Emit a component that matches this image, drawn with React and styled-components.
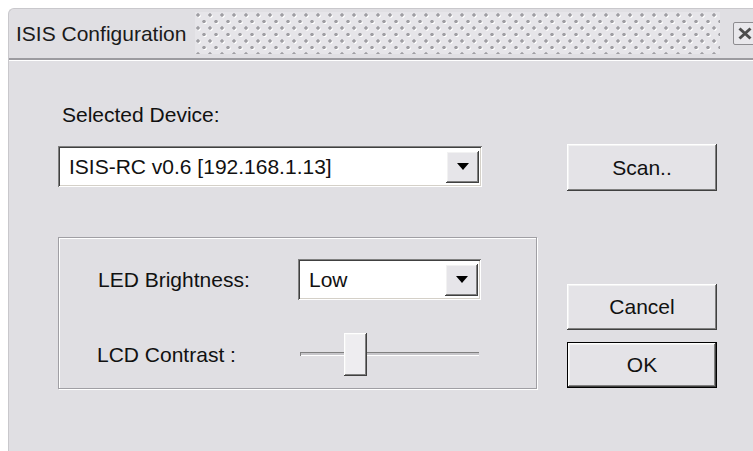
import React from "react";
import styled, { createGlobalStyle } from "styled-components";

const GlobalStyle = createGlobalStyle`
	body {
		margin: 0;
		background: #fff;
		font-family: "Liberation Sans", Arial, sans-serif;
	}
`;

const bevelOut = `
	box-shadow: inset -1px -1px #404040, inset 1px 1px #fff,
		inset -2px -2px #808080, inset 2px 2px #f2f2f2;
`;

const Page = styled.div`
	width: 753px;
	height: 451px;
	overflow: hidden;
	padding: 8px 0 0 8px;
	box-sizing: border-box;
`;

const Window = styled.div`
	width: 765px;
	height: 460px;
	background: #e0dfe3;
	border-top: 1px solid #c9c8cc;
	border-left: 1px solid #c9c8cc;
	border-top-left-radius: 6px;
	display: flex;
	flex-direction: column;
`;

const TitleBar = styled.div`
	height: 49px;
	display: flex;
	align-items: center;
	padding: 0 17px 0 7px;
	border-bottom: 2px solid #9c9ba0;
	box-shadow: 0 1px #fff;
`;

const Title = styled.span`
	font-size: 21px;
	color: #1a1a1a;
	white-space: nowrap;
`;

// dotted grip pattern filling the rest of the title bar
const Dots = styled.div`
	flex: 1;
	align-self: stretch;
	margin: 3px 13px 4px 9px;
	background-color: #e6e5e9;
	background-image: radial-gradient(circle at 3px 3px, #9f9ea3 1.4px, transparent 2px),
		radial-gradient(circle at 4px 4px, #fff 1.4px, transparent 2px),
		radial-gradient(circle at 9px 9.5px, #9f9ea3 1.4px, transparent 2px),
		radial-gradient(circle at 10px 10.5px, #fff 1.4px, transparent 2px);
	background-size: 12px 13px;
`;

const CloseBox = styled.div`
	width: 24px;
	height: 23px;
	box-sizing: border-box;
	border: 1px solid #8d8c90;
	border-radius: 2px;
	background: #e9e8ec;
	display: flex;
	align-items: center;
	justify-content: center;
`;

const Body = styled.div`
	display: flex;
	padding: 43px 0 0 49px;
	gap: 30px;
`;

const LeftCol = styled.div`
	width: 479px;
	display: flex;
	flex-direction: column;
`;

const RightCol = styled.div`
	width: 150px;
	display: flex;
	flex-direction: column;
	padding-top: 41px;
`;

const Label = styled.div`
	font-size: 21px;
	line-height: 24px;
	color: #111;
	padding-left: ${(p) => p.indent || 0}px;
	white-space: nowrap;
`;

const Combo = styled.div`
	width: ${(p) => p.width}px;
	height: 41px;
	box-sizing: border-box;
	margin-top: ${(p) => p.top || 0}px;
	background: #fff;
	display: flex;
	align-items: center;
	padding: 3px 3px 3px 11px;
	box-shadow: inset 1px 1px #808080, inset -1px -1px #fff,
		inset 2px 2px #404040, inset -2px -2px #d4d0c8;
`;

const ComboText = styled.span`
	flex: 1;
	font-size: 21px;
	color: #111;
	white-space: nowrap;
`;

const DropButton = styled.div`
	width: 33px;
	height: 32px;
	background: #e6e5e9;
	display: flex;
	align-items: center;
	justify-content: center;
	${bevelOut}
`;

const GroupBox = styled.div`
	margin-top: 50px;
	height: 152px;
	box-sizing: border-box;
	border: 1px solid #a09fa4;
	box-shadow: inset 1px 1px #fff, 1px 1px #fff;
	padding: 21px 0 12px 38px;
	display: grid;
	grid-template-columns: 201px 183px;
	grid-template-rows: 41px 43px;
	row-gap: 33px;
	align-items: center;
`;

const Slider = styled.div`
	position: relative;
	width: 183px;
	height: 43px;

	&::before {
		content: "";
		position: absolute;
		left: 2px;
		right: 2px;
		top: 19px;
		height: 4px;
		background: #c6c5c9;
		box-shadow: inset 0 1px #808080, inset 1px 0 #808080, inset 0 -1px #fff;
	}
`;

const Thumb = styled.div`
	position: relative;
	width: 23px;
	height: 43px;
	background: #eeedf0;
	${bevelOut}
`;

const Button = styled.button`
	width: 150px;
	height: ${(p) => p.h || 46}px;
	margin-top: ${(p) => p.top || 0}px;
	box-sizing: border-box;
	border: ${(p) => (p.primary ? "1px solid #000" : "none")};
	background: #e4e3e7;
	font-family: "Liberation Sans", Arial, sans-serif;
	font-size: 21px;
	color: #111;
	padding: 0;
	${bevelOut}
`;

const Arrow = () => (
	<svg width="12" height="7" viewBox="0 0 12 7">
		<polygon points="0,0 12,0 6,7" fill="#000" />
	</svg>
);

const App = () => {
	const contrast = 25;
	return (
		<Page>
			<GlobalStyle />
			<Window>
				<TitleBar>
					<Title>ISIS Configuration</Title>
					<Dots />
					<CloseBox>
						<svg width="14" height="13" viewBox="0 0 14 13">
							<path d="M1.5 1.5 L12.5 11.5 M12.5 1.5 L1.5 11.5" stroke="#4d4d4d" strokeWidth="3" />
						</svg>
					</CloseBox>
				</TitleBar>
				<Body>
					<LeftCol>
						<Label indent={4}>Selected Device:</Label>
						<Combo width={424} top={19}>
							<ComboText>ISIS-RC v0.6 [192.168.1.13]</ComboText>
							<DropButton>
								<Arrow />
							</DropButton>
						</Combo>
						<GroupBox>
							<Label indent={1}>LED Brightness:</Label>
							<Combo width={183}>
								<ComboText>Low</ComboText>
								<DropButton>
									<Arrow />
								</DropButton>
							</Combo>
							<Label>LCD Contrast :</Label>
							<Slider>
								<Thumb style={{ left: `${(contrast / 100) * 183}px` }} />
							</Slider>
						</GroupBox>
					</LeftCol>
					<RightCol>
						<Button h={47}>Scan..</Button>
						<Button top={93}>Cancel</Button>
						<Button top={12} primary>
							OK
						</Button>
					</RightCol>
				</Body>
			</Window>
		</Page>
	);
};

export default App;
